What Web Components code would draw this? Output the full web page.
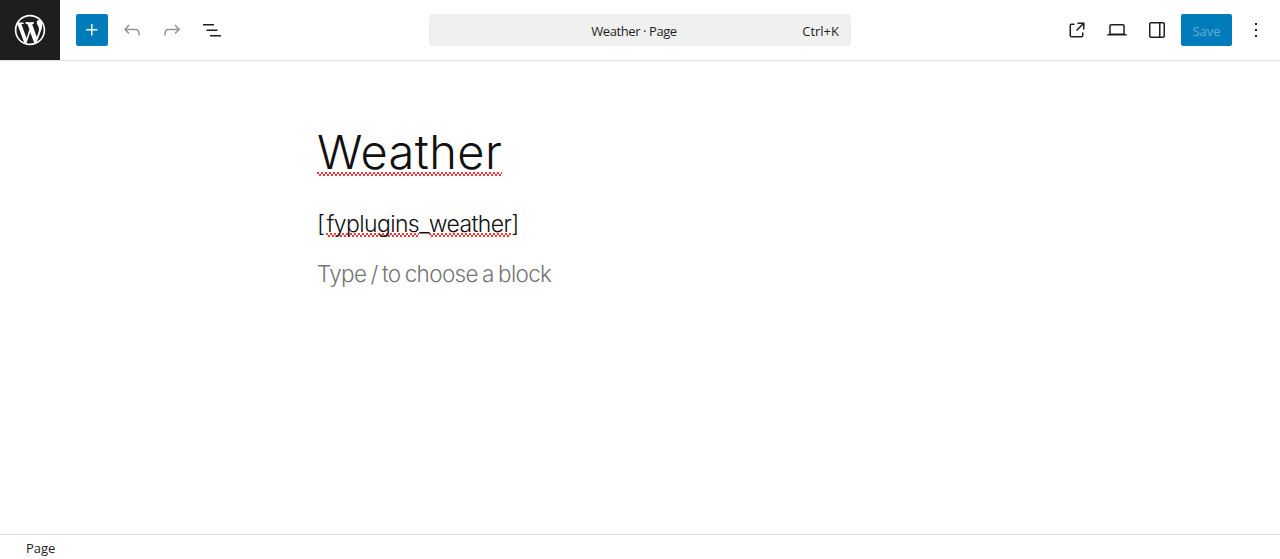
<!DOCTYPE html>
<html lang="en">
<head>
<meta charset="utf-8">
<title>Weather</title>
<style>
  html, body { margin: 0; height: 100%; }
  body { font-family: "Open Sans", "Noto Sans", sans-serif; color: #1e1e1e; background: #fff; overflow: hidden; }
</style>
</head>
<body>
<wp-editor>
  <wp-top-bar slot="top">
    <wp-logo slot="logo"></wp-logo>
    <wp-icon-button slot="left" icon="plus" variant="primary"></wp-icon-button>
    <wp-icon-button slot="left" icon="undo" variant="disabled"></wp-icon-button>
    <wp-icon-button slot="left" icon="redo" variant="disabled"></wp-icon-button>
    <wp-icon-button slot="left" icon="list"></wp-icon-button>
    <wp-command-bar slot="center" shortcut="Ctrl+K">Weather · Page</wp-command-bar>
    <wp-icon-button slot="right" icon="external"></wp-icon-button>
    <wp-icon-button slot="right" icon="laptop"></wp-icon-button>
    <wp-icon-button slot="right" icon="sidebar"></wp-icon-button>
    <wp-save-button slot="right">Save</wp-save-button>
    <wp-icon-button slot="right" icon="more"></wp-icon-button>
  </wp-top-bar>
  <wp-canvas>
    <wp-post-title><wp-misspelt>Weather</wp-misspelt></wp-post-title>
    <wp-shortcode>[<wp-misspelt style="margin-left:2px">fyplugins</wp-misspelt>_<wp-misspelt>weather</wp-misspelt>]</wp-shortcode>
    <wp-placeholder>Type / to choose a block</wp-placeholder>
  </wp-canvas>
  <wp-status-bar slot="bottom">Page</wp-status-bar>
</wp-editor>

<script>
  const ICONS = {
    plus: 'M11 12.5V17.5H12.5V12.5H17.5V11H12.5V6H11V11H6V12.5H11Z',
    undo: 'M18.3 11.7c-.6-.6-1.4-.9-2.3-.9H6.7l2.9-3.3-1.1-1-4.5 5L8.5 16l1-1-2.7-2.7H16c.5 0 .9.2 1.3.5 1 1 1 3.4 1 4.5v.3h1.5v-.2c0-1.5 0-4.3-1.5-5.7z',
    redo: 'M15.6 6.5l-1.1 1 2.9 3.3H8c-.9 0-1.7.3-2.3.9-1.4 1.5-1.4 4.2-1.4 5.6v.2h1.5v-.3c0-1.1 0-3.5 1-4.5.3-.3.7-.5 1.3-.5h9.2L14.5 15l1.1 1.1 4.6-4.6-4.6-5z',
    list: 'M3 6h11v1.5H3V6Zm3.5 5.5h11V13h-11v-1.5ZM21 17H10v1.5h11V17Z',
    external: 'M19.5 4.5h-7V6h4.44l-5.97 5.97 1.06 1.06L18 7.06v4.44h1.5v-7Zm-13 1a2 2 0 0 0-2 2v10a2 2 0 0 0 2 2h10a2 2 0 0 0 2-2v-3H17v3a.5.5 0 0 1-.5.5h-10a.5.5 0 0 1-.5-.5v-10a.5.5 0 0 1 .5-.5h3V5.5h-3Z',
    laptop: 'M20.5 16h-.7V8c0-1.1-.9-2-2-2H6.2c-1.1 0-2 .9-2 2v8h-.7c-.8 0-1.5.7-1.5 1.5h20c0-.8-.7-1.5-1.5-1.5zM5.7 8c0-.3.2-.5.5-.5h11.6c.3 0 .5.2.5.5v7.6H5.7V8z',
    sidebar: 'M18 4H6c-1.1 0-2 .9-2 2v12c0 1.1.9 2 2 2h12c1.1 0 2-.9 2-2V6c0-1.1-.9-2-2-2zm-4 14.5H6c-.3 0-.5-.2-.5-.5V6c0-.3.2-.5.5-.5h8v13zm4.5-.5c0 .3-.2.5-.5.5h-2.5v-13H18c.3 0 .5.2.5.5v12z',
    more: 'M13 19h-2v-2h2v2zm0-6h-2v-2h2v2zm0-6h-2V5h2v2z'
  }

  // small helper, every element here is just a style + markup in an open shadow root
  // markup is written without whitespace between nodes where the host is inline text
  class ShadowElement extends HTMLElement {
    constructor(html) {
      super();
      this.attachShadow({ mode: 'open' });
      this.shadowRoot.innerHTML = html.trim();
    }
  }

  class WpEditor extends ShadowElement {
    constructor() {
      super(`
        <style>
          :host { display: flex; flex-direction: column; height: 559px; }
          main { flex: 1; min-height: 0; display: block; }
        </style>
        <slot name="top"></slot>
        <main><slot></slot></main>
        <slot name="bottom"></slot>
      `);
    }
  }

  class WpTopBar extends ShadowElement {
    constructor() {
      super(`
        <style>
          :host {
            display: grid;
            grid-template-columns: 1fr 422px 1fr;
            align-items: center;
            height: 60px;
            border-bottom: 1px solid #e0e0e0;
            box-sizing: content-box;
          }
          .left, .right { display: flex; align-items: center; gap: 8px; }
          .left-group { display: flex; align-items: center; gap: 16px; }
          .right { justify-content: flex-end; padding-right: 8px; }
        </style>
        <div class="left-group">
          <slot name="logo"></slot>
          <div class="left"><slot name="left"></slot></div>
        </div>
        <slot name="center"></slot>
        <div class="right"><slot name="right"></slot></div>
      `);
    }
  }

  class WpLogo extends ShadowElement {
    constructor() {
      super(`
        <style>
          :host { display: flex; align-items: center; justify-content: center; width: 60px; height: 60px; background: #1e1e1e; }
          svg { display: block; fill: #fff; }
        </style>
        <svg width="32" height="32" viewBox="-.5 -.5 21 21" aria-hidden="true"><path d="M20 10c0-5.51-4.49-10-10-10C4.48 0 0 4.49 0 10c0 5.52 4.48 10 10 10 5.51 0 10-4.48 10-10zM7.78 15.37L4.37 6.22c.55-.02 1.17-.08 1.17-.08.5-.06.44-1.13-.06-1.11 0 0-1.45.11-2.37.11-.18 0-.37 0-.58-.01C4.12 2.69 6.87 1.11 10 1.11c2.33 0 4.45.87 6.05 2.34-.68-.11-1.65.39-1.65 1.58 0 .74.45 1.36.9 2.1.35.61.55 1.36.55 2.46 0 1.49-1.4 5-1.4 5l-3.03-8.37c.54-.02.82-.17.82-.17.5-.05.44-1.25-.06-1.22 0 0-1.44.12-2.38.12-.87 0-2.33-.12-2.33-.12-.5-.03-.56 1.2-.06 1.22l.92.08 1.26 3.41zM17.41 10c.24-.64.74-1.87.43-4.25.7 1.29 1.05 2.71 1.05 4.25 0 3.29-1.73 6.24-4.4 7.78.97-2.59 1.94-5.2 2.92-7.78zM6.1 18.09C3.12 16.65 1.11 13.53 1.11 10c0-1.3.23-2.48.72-3.59C3.25 10.3 4.67 14.2 6.1 18.09zm4.03-6.63l2.58 6.98c-.86.29-1.76.45-2.71.45-.79 0-1.57-.11-2.29-.33.81-2.38 1.62-4.74 2.42-7.1z"/></svg>
      `);
    }
  }

  class WpIconButton extends ShadowElement {
    constructor() {
      super(`
        <style>
          :host { display: flex; align-items: center; justify-content: center; width: 32px; height: 32px; border-radius: 2px; color: #1e1e1e; }
          :host([variant="primary"]) { background: #007cba; color: #fff; }
          :host([variant="disabled"]) { color: #949494; }
          svg { display: block; fill: currentColor; }
        </style>
        <svg width="24" height="24" viewBox="0 0 24 24" aria-hidden="true"><path></path></svg>
      `);
    }
    connectedCallback() {
      this.shadowRoot.querySelector('path').setAttribute('d', ICONS[this.getAttribute('icon')]);
    }
  }

  class WpCommandBar extends ShadowElement {
    constructor() {
      super(`
        <style>
          :host { display: grid; align-items: center; box-sizing: border-box; height: 32px; padding: 2px 12px 0; background: #f0f0f0; border-radius: 4px; font-size: 13px; color: #1e1e1e; }
          .label, .shortcut { grid-area: 1 / 1; }
          .label { justify-self: center; padding-right: 12px; letter-spacing: -.42px; }
          .shortcut { justify-self: end; }
        </style>
        <span class="label"><slot></slot></span>
        <span class="shortcut"></span>
      `);
    }
    connectedCallback() {
      this.shadowRoot.querySelector('.shortcut').textContent = this.getAttribute('shortcut');
    }
  }

  class WpSaveButton extends ShadowElement {
    constructor() {
      super(`
        <style>
          :host { display: flex; align-items: center; justify-content: center; box-sizing: border-box; width: 51px; height: 32px; padding-top: 1px; background: #007cba; border-radius: 2px; font-size: 13px; color: rgba(255, 255, 255, .4); }
        </style>
        <slot></slot>
      `);
    }
  }

  class WpCanvas extends ShadowElement {
    constructor() {
      super(`
        <style>
          :host { display: block; width: 646px; margin: 0 auto; padding-top: 60px; font-family: Inter, "Noto Sans", sans-serif; color: #111; }
        </style>
        <slot></slot>
      `);
    }
  }

  class WpPostTitle extends ShadowElement {
    constructor() {
      super(`
        <style>
          :host { display: block; --squiggle-offset: 4px; font-size: 47px; font-weight: 300; line-height: 62px; letter-spacing: .4px; color: #111; }
        </style>
        <slot></slot>
      `);
    }
  }

  class WpShortcode extends ShadowElement {
    constructor() {
      super(`
        <style>
          :host { display: block; --squiggle-offset: 1px; margin-top: 25px; font-size: 23px; font-weight: 300; line-height: 32px; letter-spacing: -.6px; }
        </style>
        <slot></slot>
      `);
    }
  }

  class WpPlaceholder extends ShadowElement {
    constructor() {
      super(`
        <style>
          :host { display: block; margin-top: 18px; font-size: 22.5px; font-weight: 300; line-height: 32px; letter-spacing: -.65px; word-spacing: -1.5px; color: #757575; }
        </style>
        <slot></slot>
      `);
    }
  }

  // spell check squiggle, 4px zigzag tile sitting near the bottom of the text box
  class WpMisspelt extends ShadowElement {
    constructor() {
      super(`<style>:host {
        display: inline;
        background-image:
          linear-gradient(45deg, transparent 42%, #f33 42%, #f33 58%, transparent 58%),
          linear-gradient(-45deg, transparent 42%, #f33 42%, #f33 58%, transparent 58%);
        background-size: 4px 4px, 4px 4px;
        background-repeat: repeat-x;
        background-position: 0 calc(100% - var(--squiggle-offset, 2px)), 2px calc(100% - var(--squiggle-offset, 2px));
      }</style><slot></slot>`);
    }
  }

  class WpStatusBar extends ShadowElement {
    constructor() {
      super(`
        <style>
          :host { display: flex; align-items: center; box-sizing: border-box; height: 25px; padding: 2px 0 0 26px; border-top: 1px solid #e0e0e0; font-size: 13px; color: #1e1e1e; }
        </style>
        <slot></slot>
      `);
    }
  }

  customElements.define('wp-editor', WpEditor);
  customElements.define('wp-top-bar', WpTopBar);
  customElements.define('wp-logo', WpLogo);
  customElements.define('wp-icon-button', WpIconButton);
  customElements.define('wp-command-bar', WpCommandBar);
  customElements.define('wp-save-button', WpSaveButton);
  customElements.define('wp-canvas', WpCanvas);
  customElements.define('wp-post-title', WpPostTitle);
  customElements.define('wp-shortcode', WpShortcode);
  customElements.define('wp-placeholder', WpPlaceholder);
  customElements.define('wp-misspelt', WpMisspelt);
  customElements.define('wp-status-bar', WpStatusBar);
</script>
</body>
</html>
